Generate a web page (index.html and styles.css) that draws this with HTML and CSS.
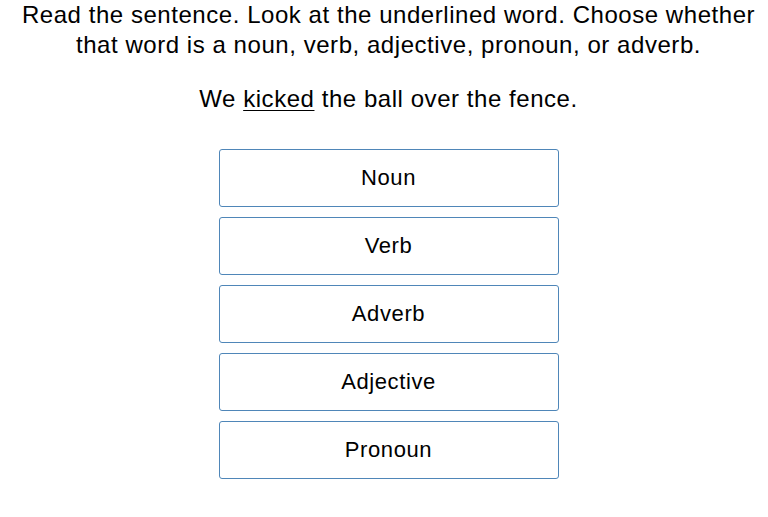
FILE: index.html
```html
<!DOCTYPE html>
<html>
<head>
<meta charset="utf-8">
<link rel="stylesheet" href="styles.css">
</head>
<body>
<main class="page">
  <p class="prompt">Read the sentence. Look at the underlined word. Choose whether<br>that word is a noun, verb, adjective, pronoun, or adverb.</p>
  <p class="sentence">We <span class="target">kicked</span> the ball over the fence.</p>
  <div class="choices">
    <button class="choice">Noun</button>
    <button class="choice">Verb</button>
    <button class="choice">Adverb</button>
    <button class="choice">Adjective</button>
    <button class="choice">Pronoun</button>
  </div>
</main>
</body>
</html>
```
FILE: styles.css
```css
html, body {
  margin: 0;
  padding: 0;
  background: #fff;
}
.page {
  font-family: "Liberation Sans", Arial, sans-serif;
  color: #000;
  padding-left: 9px;
  display: flex;
  flex-direction: column;
  align-items: center;
}
.prompt {
  margin: 0;
  font-size: 24px;
  line-height: 30px;
  letter-spacing: 0.55px;
  text-align: center;
  white-space: nowrap;
}
.sentence {
  margin: 24px 0 0;
  font-size: 24px;
  line-height: 30px;
  letter-spacing: 0.55px;
  text-align: center;
}
.target {
  text-decoration: underline;
  text-underline-offset: 3px;
  text-decoration-thickness: 1px;
}
.choices {
  margin-top: 35px;
  display: flex;
  flex-direction: column;
  gap: 10px;
}
.choice {
  width: 340px;
  height: 58px;
  border: 1px solid #4f86b8;
  border-radius: 3px;
  background: #fff;
  font-family: "Liberation Sans", Arial, sans-serif;
  font-size: 22px;
  letter-spacing: 0.6px;
  color: #000;
  padding: 0;
}
```
